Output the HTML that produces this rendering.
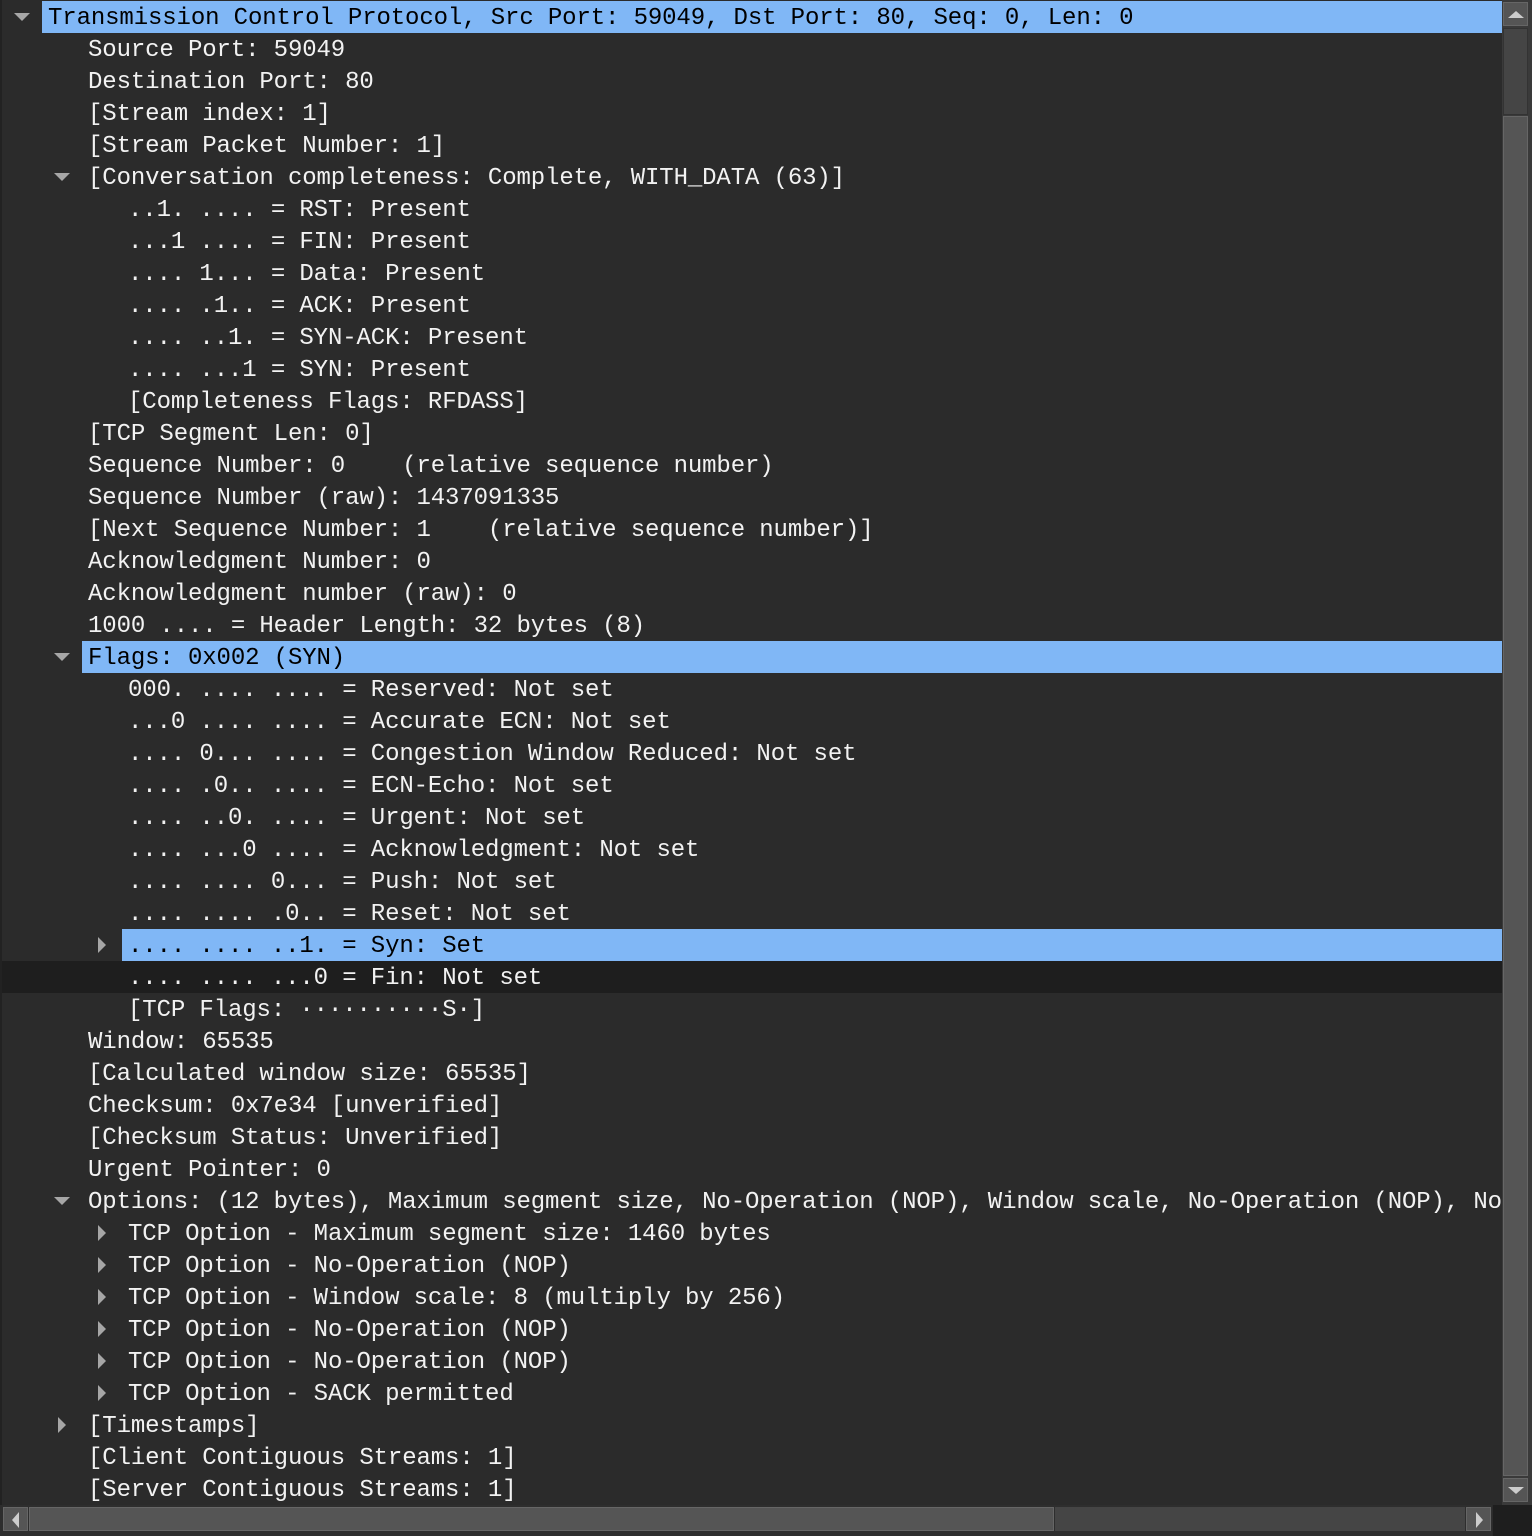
<!DOCTYPE html>
<html><head><meta charset="utf-8"><style>
html,body{margin:0;padding:0;}
body{width:1532px;height:1536px;background:#2b2b2b;position:relative;overflow:hidden;font-family:"Liberation Mono",monospace;font-size:24px;}
.r{position:absolute;left:2px;width:1500px;height:32px;overflow:hidden;}
.r.dk{background:#1e1e1e;}
.hl{position:absolute;top:0;height:32px;right:0;background:#80b7f6;}
.t{position:absolute;top:2px;line-height:32px;color:#f2f2f2;white-space:pre;letter-spacing:-0.12px;}
.r.sel .t{color:#000;}
.ad{position:absolute;top:12px;width:0;height:0;border-left:8px solid transparent;border-right:8px solid transparent;border-top:8px solid #a6a6a6;}
.ar{position:absolute;top:8px;width:0;height:0;border-top:8px solid transparent;border-bottom:8px solid transparent;border-left:8px solid #a6a6a6;}
.edge{position:absolute;left:0;top:0;width:2px;height:1536px;background:#222;}
.vs{position:absolute;left:1502px;top:0;width:30px;height:1505px;background:#3a3a3a;}
.btn{position:absolute;background:#555;border:1px solid #666;box-sizing:border-box;}
.hs{position:absolute;left:0;top:1505px;width:1492px;height:31px;background:#2e2e2e;}
.corner{position:absolute;left:1493px;top:1505px;width:39px;height:31px;background:#1e1e1e;}
</style></head><body>
<div class="edge"></div>
<div id="rows"></div>
<script>
var rows=[
[0,'d',1,0,'Transmission Control Protocol, Src Port: 59049, Dst Port: 80, Seq: 0, Len: 0'],
[1,'',0,0,'Source Port: 59049'],
[1,'',0,0,'Destination Port: 80'],
[1,'',0,0,'[Stream index: 1]'],
[1,'',0,0,'[Stream Packet Number: 1]'],
[1,'d',0,0,'[Conversation completeness: Complete, WITH_DATA (63)]'],
[2,'',0,0,'..1. .... = RST: Present'],
[2,'',0,0,'...1 .... = FIN: Present'],
[2,'',0,0,'.... 1... = Data: Present'],
[2,'',0,0,'.... .1.. = ACK: Present'],
[2,'',0,0,'.... ..1. = SYN-ACK: Present'],
[2,'',0,0,'.... ...1 = SYN: Present'],
[2,'',0,0,'[Completeness Flags: RFDASS]'],
[1,'',0,0,'[TCP Segment Len: 0]'],
[1,'',0,0,'Sequence Number: 0    (relative sequence number)'],
[1,'',0,0,'Sequence Number (raw): 1437091335'],
[1,'',0,0,'[Next Sequence Number: 1    (relative sequence number)]'],
[1,'',0,0,'Acknowledgment Number: 0'],
[1,'',0,0,'Acknowledgment number (raw): 0'],
[1,'',0,0,'1000 .... = Header Length: 32 bytes (8)'],
[1,'d',1,0,'Flags: 0x002 (SYN)'],
[2,'',0,0,'000. .... .... = Reserved: Not set'],
[2,'',0,0,'...0 .... .... = Accurate ECN: Not set'],
[2,'',0,0,'.... 0... .... = Congestion Window Reduced: Not set'],
[2,'',0,0,'.... .0.. .... = ECN-Echo: Not set'],
[2,'',0,0,'.... ..0. .... = Urgent: Not set'],
[2,'',0,0,'.... ...0 .... = Acknowledgment: Not set'],
[2,'',0,0,'.... .... 0... = Push: Not set'],
[2,'',0,0,'.... .... .0.. = Reset: Not set'],
[2,'r',1,0,'.... .... ..1. = Syn: Set'],
[2,'',0,1,'.... .... ...0 = Fin: Not set'],
[2,'',0,0,'[TCP Flags: ··········S·]'],
[1,'',0,0,'Window: 65535'],
[1,'',0,0,'[Calculated window size: 65535]'],
[1,'',0,0,'Checksum: 0x7e34 [unverified]'],
[1,'',0,0,'[Checksum Status: Unverified]'],
[1,'',0,0,'Urgent Pointer: 0'],
[1,'d',0,0,'Options: (12 bytes), Maximum segment size, No-Operation (NOP), Window scale, No-Operation (NOP), No-Operation (NOP), SACK permitted'],
[2,'r',0,0,'TCP Option - Maximum segment size: 1460 bytes'],
[2,'r',0,0,'TCP Option - No-Operation (NOP)'],
[2,'r',0,0,'TCP Option - Window scale: 8 (multiply by 256)'],
[2,'r',0,0,'TCP Option - No-Operation (NOP)'],
[2,'r',0,0,'TCP Option - No-Operation (NOP)'],
[2,'r',0,0,'TCP Option - SACK permitted'],
[1,'r',0,0,'[Timestamps]'],
[1,'',0,0,'[Client Contiguous Streams: 1]'],
[1,'',0,0,'[Server Contiguous Streams: 1]']
];
var h='';
function esc(s){return s.replace(/&/g,'&amp;').replace(/</g,'&lt;');}
rows.forEach(function(r,i){
 var L=r[0],y=1+i*32;
 h+='<div class="r'+(r[2]?' sel':'')+(r[3]?' dk':'')+'" style="top:'+y+'px">';
 if(r[2]) h+='<div class="hl" style="left:'+(40+40*L)+'px"></div>';
 if(r[1]=='d') h+='<div class="ad" style="left:'+(12+40*L)+'px"></div>';
 if(r[1]=='r') h+='<div class="ar" style="left:'+(16+40*L)+'px"></div>';
 h+='<div class="t" style="left:'+(46+40*L)+'px">'+esc(r[4])+'</div></div>';
});
document.getElementById('rows').innerHTML=h;
</script>
<div class="vs">
 <div class="btn" style="left:1px;top:2px;width:25px;height:24px;"><div style="position:absolute;left:4px;top:8px;border-left:8px solid transparent;border-right:8px solid transparent;border-bottom:7px solid #ccc;"></div></div>
 <div style="position:absolute;left:1px;top:28px;width:25px;height:87px;background:#454545;border:1px solid #333;box-sizing:border-box;"></div>
 <div class="btn" style="left:1px;top:116px;width:25px;height:1360px;"></div>
 <div class="btn" style="left:1px;top:1478px;width:25px;height:24px;"><div style="position:absolute;left:4px;top:8px;border-left:8px solid transparent;border-right:8px solid transparent;border-top:7px solid #ccc;"></div></div>
</div>
<div class="hs">
 <div class="btn" style="left:3px;top:2px;width:25px;height:24px;"><div style="position:absolute;left:8px;top:4px;border-top:8px solid transparent;border-bottom:8px solid transparent;border-right:7px solid #ccc;"></div></div>
 <div class="btn" style="left:29px;top:2px;width:1025px;height:24px;"></div>
 <div style="position:absolute;left:1055px;top:2px;width:410px;height:24px;background:#454545;"></div>
 <div class="btn" style="left:1466px;top:2px;width:25px;height:24px;"><div style="position:absolute;left:9px;top:4px;border-top:8px solid transparent;border-bottom:8px solid transparent;border-left:7px solid #ccc;"></div></div>
</div>
<div class="corner"></div>
</body></html>
